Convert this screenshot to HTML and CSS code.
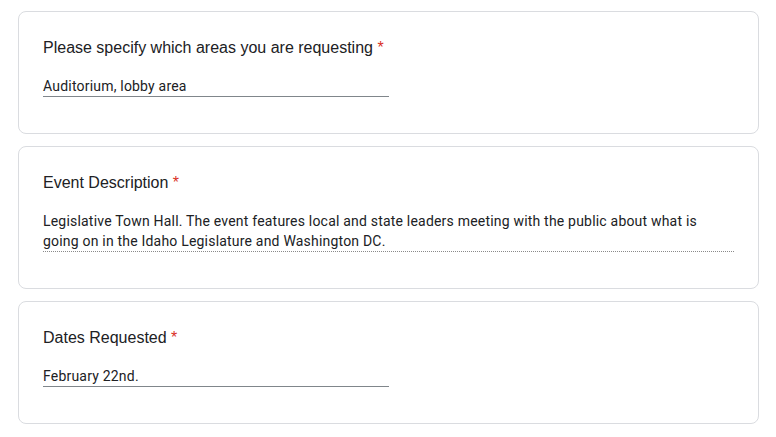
FILE: index.html
```html
<!DOCTYPE html>
<html lang="en">
<head>
<meta charset="utf-8">
<link rel="stylesheet" href="styles.css">
</head>
<body>
<main class="form">
  <section class="card">
    <div class="title">Please specify which areas you are requesting <span class="req">*</span></div>
    <div class="answer short">Auditorium, lobby area</div>
  </section>
  <section class="card">
    <div class="title">Event Description <span class="req">*</span></div>
    <div class="answer long">Legislative Town Hall. The event features local and state leaders meeting with the public about what is going on in the Idaho Legislature and Washington DC.</div>
  </section>
  <section class="card">
    <div class="title">Dates Requested <span class="req">*</span></div>
    <div class="answer short">February 22nd.</div>
  </section>
</main>
</body>
</html>
```

FILE: styles.css
```css
html, body {
  margin: 0;
  padding: 0;
  background: #ffffff;
}
.form {
  display: flex;
  flex-direction: column;
  gap: 12px;
  padding: 11px 17px 0 18px;
}
.card {
  border: 1px solid #dadce0;
  border-radius: 8px;
  padding: 24px 24px 24px 24px;
  display: flex;
  flex-direction: column;
  gap: 16px;
  background: #fff;
}
.title {
  font-family: "Liberation Sans", Arial, sans-serif;
  font-size: 16px;
  line-height: 24px;
  color: #202124;
}
.req {
  color: #d93025;
}
.answer {
  font-family: Roboto, "Liberation Sans", sans-serif;
  font-size: 14px;
  letter-spacing: 0.2px;
  line-height: 20px;
  color: #202124;
  margin-bottom: 12px;
}
.short {
  width: 50%;
  border-bottom: 1px solid #80868b;
}
.long {
  border-bottom: 1px dotted #8a8a8a;
}
```
